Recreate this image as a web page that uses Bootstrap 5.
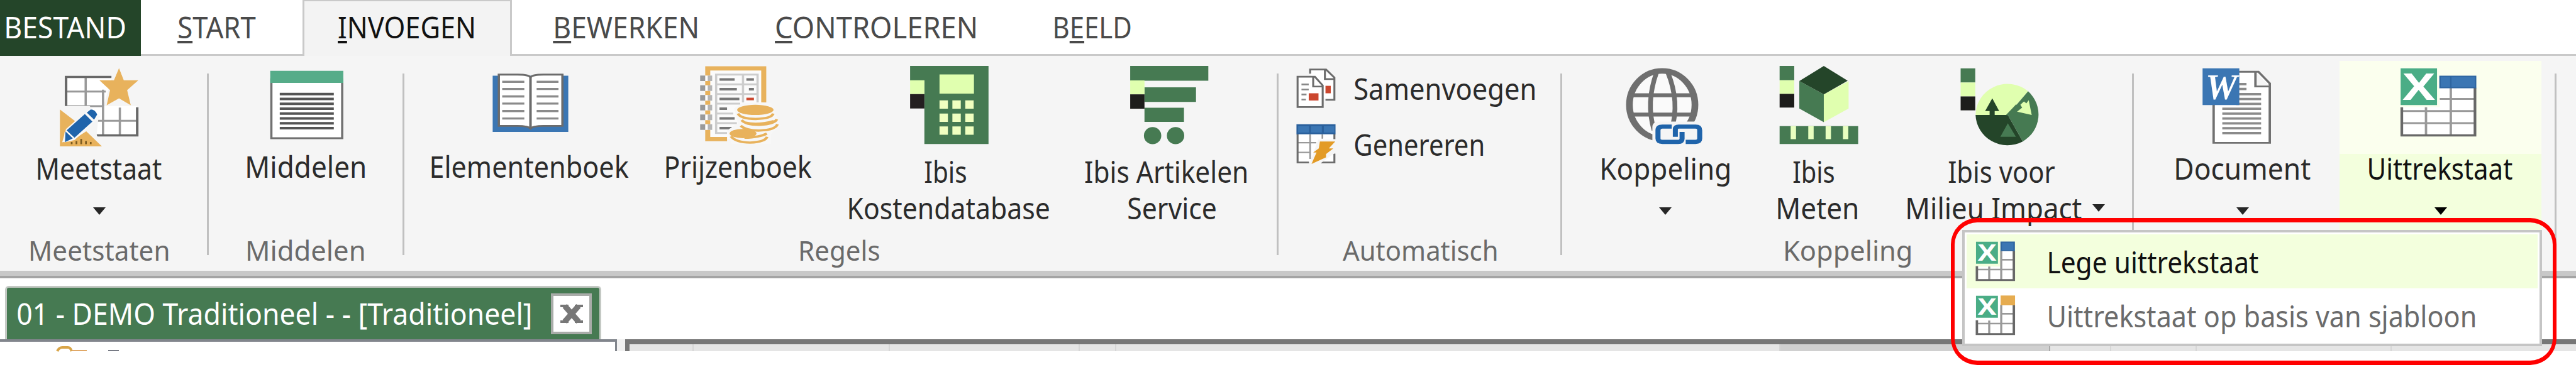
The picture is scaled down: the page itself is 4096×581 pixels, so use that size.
<!DOCTYPE html>
<html lang="nl">
  <head>
    <meta charset="UTF-8" />
    <meta name="viewport" content="width=device-width, initial-scale=1.0" />
    <title>Ibis - Invoegen</title>
    <link
      rel="stylesheet"
      href="https://cdn.jsdelivr.net/npm/bootstrap@5.3.3/dist/css/bootstrap.min.css"
    />
    <script src="https://cdn.jsdelivr.net/npm/bootstrap@5.3.3/dist/js/bootstrap.bundle.min.js"></script>
    <style>
      body {
        width: 4096px;
        height: 581px;
        overflow: hidden;
        background: #fff;
        font-family: "Noto Sans", "Open Sans", sans-serif;
        font-size: 48px;
        line-height: 58px;
        color: #2b2b2b;
      }
      svg { display: block; flex-shrink: 0; overflow: visible; }

      /* labels are squeezed to the width in data-w */
      .fit { display: block; height: 58px; white-space: nowrap; flex-shrink: 0; }
      .fit > span { display: inline-block; transform-origin: 0 0; }
      .fit u {
        text-decoration-thickness: 4px;
        text-underline-offset: 4px;
        text-decoration-skip-ink: none;
      }

      /* tab bar */
      .tabs-bar { height: 89px; color: #4a4a4a; }
      .tabs-bar .tab-item { height: 89px; padding-top: 14px; border-bottom: 3px solid #c9c9c9; }
      .tabs-bar .tab-file { width: 224px; padding-left: 8px; background: #244529; color: #fff; border-bottom: 0; }
      .tabs-bar .tab-start { width: 257px; padding-left: 58px; }
      .tabs-bar .tab-active {
        width: 333px;
        padding: 12px 0 0 52px;
        background: #f3f3f3;
        color: #111;
        border: 3px solid #c9c9c9;
        border-width: 2px 3px 0;
      }
      .tabs-bar .tab-rest { padding-left: 67px; }
      .gap-tabs { gap: 123px; }

      /* ribbon */
      .ribbon {
        height: 354px;
        background: #f5f5f5;
        border-bottom: 4px solid #a4a4a4;
        box-shadow: inset 0 -8px #c8c8c8;
      }
      .ribbon-group { height: 338px; padding-bottom: 2px; flex-shrink: 0; }
      .rule { width: 3px; height: 289px; margin-top: 28px; background: #c0c0c0; flex-shrink: 0; }
      .ribbon-caption { font-size: 43px; line-height: 52px; color: #6a6a6a; }
      .ribbon-caption .fit { height: 52px; }
      .tool { height: 276px; padding-top: 15px; flex-shrink: 0; }
      .tool > svg { width: 100%; height: 130px; }
      .tool .arrow { width: 20px; height: 12px; }
      .drop .fit { margin-top: 5px; }
      .drop .arrow { margin-top: 33px; }
      .plain .fit { margin-top: 2px; }
      .double .first { margin-top: 10px; }
      .shift-left { margin-right: 12px; }
      .shift-right { margin-left: 8px; }
      .g-meet { width: 329px; padding-right: 13px; }
      .g-mid { width: 308px; }
      .g-reg { width: 1387px; padding-left: 22px; }
      .g-reg .ribbon-caption { padding-right: 25px; }
      .g-auto { width: 448px; }
      .g-kop { width: 906px; padding-left: 10px; }
      .g-kop .ribbon-caption { padding-right: 9px; }
      .g-doc { width: 669px; padding-left: 19px; }
      .w-meet { width: 316px; }
      .w-mid { width: 308px; }
      .w-ele { width: 355px; }
      .w-pri { width: 309px; }
      .w-kos { width: 359px; }
      .w-art { width: 342px; }
      .w-kop { width: 307px; }
      .w-ibm { width: 176px; }
      .w-mil { width: 403px; margin-left: 10px; }
      .w-doc { width: 308px; }
      .w-uit {
        width: 321px;
        margin-top: 8px;
        padding-top: 7px;
        color: #111;
        background: linear-gradient(#fbffee 148px, #f3ffdd 148px);
      }
      .auto-list { padding: 19px 0 0 28px; height: 276px; }
      .auto-list svg { width: 63px; height: 65px; }
      .auto-list .auto-row { height: 89px; gap: 28px; }
      .auto-list .fit { margin-top: 4px; }

      /* documents */
      .doc-bar { height: 97px; padding: 12px 0 0 8px; }
      .doc-tab {
        width: 948px;
        height: 85px;
        padding: 0 12px 0 15px;
        background: #467a52;
        border: 3px solid #c4c9c4;
        border-bottom: 0;
        border-radius: 6px 6px 0 0;
        color: #fff;
      }
      .doc-close { width: 65px; height: 65px; background: #fff; border: 4px solid #a9aca9; }
      .panes { height: 19px; }
      .pane-left { width: 981px; border: 4px solid #81858c; border-width: 4px 3px 0 0; padding-left: 88px; }
      .pane-gap { width: 13px; background: #f1f1f1; }
      .pane-right { width: 3102px; border: solid #777; border-width: 8px 0 0 7px; background: #e5e5e5; }
      .pane-right div { border-right: 2px solid #d6d6d6; flex-shrink: 0; }

      /* drop-down menu and the marker round it */
      .menu-pop {
        position: absolute;
        left: 3120px;
        top: 366px;
        width: 922px;
        height: 185px;
        padding: 3px;
        background: #fff;
        border: 4px solid #c5c5c5;
      }
      .menu-row { height: 86px; padding-left: 14px; gap: 51px; color: #6b6b6b; }
      .menu-row.on { background: #f3ffdd; color: #111; }
      .menu-row svg { width: 64px; height: 64px; margin-top: -1px; }
      .menu-row .fit { margin-top: 2px; }
      .marker {
        position: absolute;
        left: 3102px;
        top: 347px;
        width: 963px;
        height: 234px;
        border: 7px solid #f00;
        border-width: 7px 6px;
        border-radius: 42px;
      }
    </style>
  </head>

  <body class="position-relative">
    <header class="tabs-bar d-flex">
      <div class="tab-item tab-file"><div class="fit" data-w="192"><span>BESTAND</span></div></div>
      <div class="tab-item tab-start"><div class="fit" data-w="126"><span><u>S</u>TART</span></div></div>
      <div class="tab-item tab-active"><div class="fit" data-w="218"><span><u>I</u>NVOEGEN</span></div></div>
      <nav class="tab-item tab-rest d-flex flex-grow-1 gap-tabs">
        <div class="fit" data-w="228"><span><u>B</u>EWERKEN</span></div>
        <div class="fit" data-w="320"><span><u>C</u>ONTROLEREN</span></div>
        <div class="fit" data-w="124"><span>B<u>E</u>ELD</span></div>
      </nav>
    </header>

    <main class="ribbon d-flex">
      <section class="ribbon-group g-meet d-flex flex-column justify-content-between">
        <div class="tool drop w-meet d-flex flex-column align-items-center">
          <svg viewBox="0 280 709.7 352" preserveAspectRatio="none">
            <path fill="#fff" d="M236 330H400L370 455H490V582H236z" />
            <path fill="none" stroke="#999" stroke-width="8" d="M306 330V470M368 385V582M236 393H378M236 456H370M428 462V582M345 519H490" />
            <path fill="none" stroke="#686868" stroke-width="9" d="M236 470V330H398M345 582H490V461" />
            <path fill="#f5f5f5" d="M210 455L320 455L352 500L345 580L370 632H210z" />
            <path fill="#e8b25c" d="M425 292l17 52h52l-40 43 13 65-42-30-44 30 12-65-38-43h52z" />
            <path fill="#e8b25c" d="M214 470l54 50-38 50v42l24-6 54-42 56 65H214z" />
            <path fill="#f8f8f8" d="M222 612l14-58 84-88 38 36-92 100z" />
            <path fill="#1f64ab" d="M324 470q16 0 23 22l-11 22-26-30zM303 490l27 32-64 70-28-32zM234 565l26 30-28 16z" />
            <path stroke="#7a5a20" stroke-width="6" d="M256 610v10M273 606v14M290 597v23M307 606v14M324 610v10" />
          </svg>
          <div class="fit" data-w="200"><span>Meetstaat</span></div>
          <svg class="arrow" viewBox="0 0 20 12"><path d="M0 0H20L10 12z" fill="#262626" /></svg>
        </div>
        <div class="ribbon-caption d-flex justify-content-center"><div class="fit" data-w="222"><span>Meetstaten</span></div></div>
      </section>
      <div class="rule"></div>

      <section class="ribbon-group g-mid d-flex flex-column justify-content-between">
        <div class="tool plain w-mid d-flex flex-column align-items-center">
          <svg viewBox="745.6 280 691.7 352" preserveAspectRatio="none">
            <path fill="#fff" stroke="#717171" stroke-width="8" d="M969 340H1222V594H969z" />
            <path fill="#56ac89" d="M965 304H1226V356H965z" />
            <path stroke="#555" stroke-width="11" d="M999 404H1192M999 425H1192M999 446H1192M999 467H1192M999 488H1192M999 509H1192M999 530H1192M999 551H1192" />
          </svg>
          <div class="fit" data-w="190"><span>Middelen</span></div>
        </div>
        <div class="ribbon-caption d-flex justify-content-center"><div class="fit" data-w="188"><span>Middelen</span></div></div>
      </section>
      <div class="rule"></div>

      <section class="ribbon-group g-reg d-flex flex-column justify-content-between">
        <div class="d-flex">
          <div class="tool plain w-ele d-flex flex-column align-items-center">
            <svg viewBox="30.1 280 797.3 352" preserveAspectRatio="none">
              <path fill="#3b76b3" d="M296 325H566V567H296z" />
              <path fill="#fff" stroke="#6c6c6c" stroke-width="8" d="M318 320H385Q425 320 431 332Q437 320 477 320H545V541H477Q440 541 431 552Q422 541 385 541H318z" />
              <path stroke="#6c6c6c" stroke-width="9" d="M431 328V552" />
              <path stroke="#8b8b8b" stroke-width="9" d="M330 351H409M330 382H409M330 414H409M330 445H409M330 477H409M330 509H409M453 351H531M453 382H531M453 414H531M453 445H531M453 477H531M453 509H531" />
            </svg>
            <div class="fit" data-w="317"><span>Elementenboek</span></div>
          </div>
          <div class="tool plain w-pri d-flex flex-column align-items-center">
            <svg viewBox="827.4 280 694 352" preserveAspectRatio="none">
              <path fill="#fbfbfb" d="M1064 293H1264V440L1150 598H1064z" />
              <path fill="none" stroke="#e8b25c" stroke-width="18" d="M1264 440V293H1064V598H1133" />
              <path fill="none" stroke="#cdcdcd" stroke-width="8" d="M1242 440V320H1094V572H1133M1094 362H1242M1094 404H1242M1094 445H1180M1094 488H1155M1094 529H1168M1190 320V440" />
              <path stroke="#777" stroke-width="11" d="M1106 341H1160M1106 383H1168M1106 425H1177M1106 467H1133M1106 509H1160M1106 551H1150M1202 341H1229M1211 383H1229" />
              <path stroke="#cb472f" stroke-width="11" d="M1202 425H1229" />
              <path stroke="#fff" stroke-width="40" stroke-dasharray="24 18" d="M1064 324V560" />
              <path stroke="#999" stroke-width="18" stroke-dasharray="24 18" d="M1046 324V560" />
              <path stroke="#b5b5b5" stroke-width="16" stroke-dasharray="24 18" d="M1072 324V560" />
              <path fill="#f7f7f7" d="M1158 465L1190 442H1290L1325 540 1290 575V620H1150L1133 560 1172 530z" />
              <g fill="#e8b25c">
                <ellipse cx="1234" cy="472" rx="65" ry="22" />
                <ellipse cx="1190" cy="574" rx="48" ry="20" />
              </g>
              <g fill="none" stroke="#e8b25c" stroke-width="10">
                <path d="M1172 488Q1182 511 1235 511Q1292 510 1298 488" />
                <path d="M1185 516Q1200 537 1250 536Q1302 533 1311 512" />
                <path d="M1182 540Q1200 562 1250 561Q1306 558 1313 534" />
                <path d="M1200 527Q1240 540 1300 520" />
                <path d="M1147 586Q1165 613 1215 613Q1270 610 1276 588" />
                <path d="M1195 592Q1250 590 1275 574" />
              </g>
            </svg>
            <div class="fit" data-w="235"><span>Prijzenboek</span></div>
          </div>
          <div class="tool double w-kos d-flex flex-column align-items-center">
            <svg viewBox="57.7 280 806.3 352" preserveAspectRatio="none">
              <path fill="#467a52" d="M323 283H603V619H374V345H323z" />
              <path fill="#e0ffaf" d="M323 344H374V404H323zM428 319H551V402H428z" />
              <path fill="#231f20" d="M323 404H374V466H323z" />
              <path stroke="#f0ffc0" stroke-width="36" stroke-dasharray="30 16" d="M428 449H551M428 506H551M428 561H551" />
            </svg>
            <div class="fit first shift-left" data-w="69"><span>Ibis</span></div>
            <div class="fit" data-w="321"><span>Kostendatabase</span></div>
          </div>
          <div class="tool double w-art d-flex flex-column align-items-center">
            <svg viewBox="864 280 768.1 352" preserveAspectRatio="none">
              <path fill="#467a52" d="M1109 283H1388V346H1109zM1160 375H1344V438H1160zM1160 463H1301V524H1160z" />
              <path fill="#e0ffaf" d="M1109 345H1160V405H1109z" />
              <path fill="#1d1d1b" d="M1109 405H1160V467H1109z" />
              <ellipse fill="#467a52" cx="1189" cy="583" rx="31" ry="37" />
              <ellipse fill="#467a52" cx="1271" cy="583" rx="31" ry="37" />
            </svg>
            <div class="fit first shift-left" data-w="260"><span>Ibis Artikelen</span></div>
            <div class="fit shift-right" data-w="142"><span>Service</span></div>
          </div>
        </div>
        <div class="ribbon-caption d-flex justify-content-center"><div class="fit" data-w="128"><span>Regels</span></div></div>
      </section>
      <div class="rule"></div>

      <section class="ribbon-group g-auto d-flex flex-column justify-content-between">
        <div class="auto-list">
          <div class="auto-row d-flex">
            <svg viewBox="133 290 142 175" preserveAspectRatio="none">
              <path fill="#fff" stroke="#6c6c6c" stroke-width="7" d="M183 315V297H240L270 332V427H238" />
              <path fill="none" stroke="#6c6c6c" stroke-width="7" d="M236 300V338H270" />
              <path fill="#cb472f" d="M238 367H257V399H238z" />
              <path fill="#fff" stroke="#6c6c6c" stroke-width="7" d="M138 328H200L228 365V458H138z" />
              <path fill="none" stroke="#6c6c6c" stroke-width="7" d="M194 330V370H226" />
              <path stroke="#888" stroke-width="7" d="M152 361H178M152 383H178M152 404H170M152 426H168" />
              <path fill="#cb472f" d="M178 399H213V430H178z" />
            </svg>
            <div class="fit" data-w="289"><span>Samenvoegen</span></div>
          </div>
          <div class="auto-row d-flex">
            <svg viewBox="133 532 142 175" preserveAspectRatio="none">
              <path fill="#fff" d="M137 575H271V698H137z" />
              <path stroke="#999" stroke-width="6" d="M183 577V683M227 577V596M140 613H205M140 655H185" />
              <path fill="none" stroke="#6c6c6c" stroke-width="7" d="M138 575V698H179M270 575V598M270 660V698H222" />
              <path fill="#2a609c" d="M134 534H274V577H134z" />
              <path fill="#3b76b3" d="M140 542H179V570H140zM186 542H225V570H186zM232 542H270V570H232z" />
              <path fill="#f5f5f5" d="M212 600H274V655L215 706H180z" />
              <path fill="#e39b26" d="M218 608H273L250 638H266L240 662V676L188 704 206 655H194L214 638z" />
            </svg>
            <div class="fit" data-w="207"><span>Genereren</span></div>
          </div>
        </div>
        <div class="ribbon-caption d-flex justify-content-center"><div class="fit" data-w="248"><span>Automatisch</span></div></div>
      </section>
      <div class="rule"></div>

      <section class="ribbon-group g-kop d-flex flex-column justify-content-between">
        <div class="d-flex">
          <div class="tool drop w-kop d-flex flex-column align-items-center">
            <svg viewBox="1106.4 280 689.5 352" preserveAspectRatio="none">
              <ellipse fill="#fafafa" stroke="#6f6f6f" stroke-width="24" cx="1441" cy="450" rx="117" ry="146" />
              <path fill="none" stroke="#6f6f6f" stroke-width="17" d="M1325 409H1558M1325 492H1558M1421 310Q1382 440 1412 560M1461 310Q1505 440 1474 560" />
              <path fill="#f5f5f5" d="M1406 545Q1406 522 1435 522H1600V632H1406z" />
              <g fill="none" stroke="#1f64ab" stroke-width="18">
                <path d="M1475 544H1442Q1426 544 1426 560V595Q1426 610 1442 610H1498Q1512 610 1512 596V567" />
                <path d="M1525 610H1560Q1575 610 1575 595V560Q1575 544 1560 544H1500Q1488 544 1488 556V588" />
              </g>
            </svg>
            <div class="fit" data-w="206"><span>Koppeling</span></div>
            <svg class="arrow" viewBox="0 0 20 12"><path d="M0 0H20L10 12z" fill="#262626" /></svg>
          </div>
          <div class="tool double w-ibm d-flex flex-column align-items-center">
            <svg viewBox="311.6 280 370.6 352" preserveAspectRatio="none">
              <path fill="#467a52" d="M372 283H421V344H372zM438 348L520 405V525L438 466zM372 542H635V619H372z" />
              <path fill="#e0ffaf" d="M372 344H421V403H372zM520 405L603 348V466L520 525z" />
              <path fill="#1d1d1b" d="M372 403H421V462H372z" />
              <path fill="#244529" d="M520 283L600 346 520 405 438 348z" />
              <path stroke="#e8ffc0" stroke-width="18" d="M418 542V598M477 542V598M535 542V598M593 542V598" />
            </svg>
            <div class="fit first shift-left" data-w="68"><span>Ibis</span></div>
            <div class="fit" data-w="129"><span>Meten</span></div>
          </div>
          <div class="tool double w-mil d-flex flex-column align-items-center">
            <svg viewBox="703.2 280 848.5 352" preserveAspectRatio="none">
              <path fill="#467a52" d="M978 293H1027V354H978z" />
              <path fill="#e0ffaf" d="M978 354H1027V414H978z" />
              <path fill="#1d1d1b" d="M978 414H1027V474H978z" />
              <path fill="#e0ffaf" d="M1136 494H1028A107 135 0 0 1 1204 392z" />
              <path fill="#467a52" d="M1136 494L1204 392A107 135 0 0 1 1186 608z" />
              <path fill="#244529" d="M1136 494L1186 608A107 135 0 0 1 1028 494zM1084 422L1107 477H1092V497H1075V477H1060z" />
              <path fill="#467a52" d="M1136 530L1163 588H1111zM1130 494L1164 448 1172 460 1145 500zM1178 434L1196 408 1204 418 1186 444z" />
              <path fill="#e0ffaf" d="M1206 430L1216 494 1167 480 1184 462 1178 450 1190 436 1198 444z" />
            </svg>
            <div class="fit first shift-left" data-w="173"><span>Ibis voor</span></div>
            <div class="d-flex">
              <div class="fit" data-w="280"><span>Milieu Impact</span></div>
              <svg class="arrow align-self-center ms-3" viewBox="0 0 20 12"><path d="M0 0H20L10 12z" fill="#262626" /></svg>
            </div>
          </div>
        </div>
        <div class="ribbon-caption d-flex justify-content-center"><div class="fit" data-w="202"><span>Koppeling</span></div></div>
      </section>
      <div class="rule"></div>

      <section class="ribbon-group g-doc d-flex">
        <div class="tool drop w-doc d-flex flex-column align-items-center">
          <svg viewBox="128 280 648.5 352" preserveAspectRatio="none">
            <path fill="#fff" stroke="#717171" stroke-width="8" d="M355 308H505L543 358V614H355z" />
            <path fill="#f5f5f5" stroke="#717171" stroke-width="8" d="M495 308V371H543" />
            <path stroke="#8b8b8b" stroke-width="10" d="M430 361H465M430 382H465M430 404H514M430 425H514M430 446H514M384 467H514M384 488H514M384 509H514M384 530H514M384 551H514M384 572H514" />
            <path fill="#3b76b3" d="M318 293H441V451H318z" />
            <text x="328" y="427" font-family="Liberation Serif" font-weight="700" font-style="italic" font-size="154" textLength="106" lengthAdjust="spacingAndGlyphs" fill="#fff">W</text>
          </svg>
          <div class="fit" data-w="217"><span>Document</span></div>
          <svg class="arrow" viewBox="0 0 20 12"><path d="M0 0H20L10 12z" fill="#262626" /></svg>
        </div>
        <div class="tool drop w-uit d-flex flex-column align-items-center">
          <svg viewBox="776.5 280 675.9 352" preserveAspectRatio="none">
            <path fill="#fff" d="M985 460H1112V377H1230V582H985z" />
            <path stroke="#999" stroke-width="8" d="M1112 425H1230M985 477H1230M985 529H1230M1066 461V580M1149 377V580" />
            <path fill="none" stroke="#686868" stroke-width="9" d="M985 461V582H1230V377" />
            <path fill="#3b76b3" stroke="#2e65a0" stroke-width="5" d="M1113 327H1232V376H1113zM1149 327V376" />
            <path fill="#4aad86" d="M981 293H1103V451H981z" />
            <text x="988" y="430" font-family="Open Sans" font-weight="700" font-size="160" textLength="108" lengthAdjust="spacingAndGlyphs" fill="#fff">X</text>
          </svg>
          <div class="fit" data-w="231"><span>Uittrekstaat</span></div>
          <svg class="arrow" viewBox="0 0 20 12"><path d="M0 0H20L10 12z" fill="#000" /></svg>
        </div>
      </section>
      <div class="rule"></div>
    </main>

    <div class="doc-bar">
      <div class="doc-tab d-flex align-items-center justify-content-between">
        <div class="fit" data-w="818"><span>01 - DEMO Traditioneel - - [Traditioneel]</span></div>
        <div class="doc-close d-flex align-items-center justify-content-center">
          <svg width="36" height="29" viewBox="0 0 36 29">
            <path fill="none" stroke="#777" stroke-width="9" d="M7 2L29 27M29 2L7 27" />
            <path fill="#777" d="M0 0H13V4H0zM23 0H36V4H23zM0 25H13V29H0zM23 25H36V29H23z" />
          </svg>
        </div>
      </div>
    </div>

    <div class="panes d-flex">
      <div class="pane-left">
        <svg width="104" height="15" viewBox="0 0 104 15">
          <path fill="none" stroke="#d9a548" stroke-width="4" d="M3 15Q6 9 11 9H20Q24 9 26 15" />
          <path fill="#e0a868" d="M26 13H50V15H26z" />
          <path fill="#777b85" d="M84 13H101V15H84z" />
        </svg>
      </div>
      <div class="pane-gap"></div>
      <div class="pane-right d-flex" id="columnHeads"></div>
    </div>

    <div class="menu-pop">
      <div class="menu-row on d-flex align-items-center">
        <svg viewBox="1028 1037 134 172" preserveAspectRatio="none">
          <path fill="#fff" d="M1033 1145H1114V1078H1156V1202H1033z" />
          <path stroke="#999" stroke-width="7" d="M1114 1078V1202M1114 1116H1156M1033 1158H1156M1074 1145V1202" />
          <path fill="none" stroke="#686868" stroke-width="8" d="M1033 1144V1203H1156V1078" />
          <path fill="#3b76b3" stroke="#2e65a0" stroke-width="5" d="M1114 1041H1157V1077H1114z" />
          <path fill="#4aad86" d="M1030 1039H1103V1133H1030z" />
          <text x="1036" y="1121" font-family="Open Sans" font-weight="700" font-size="98" textLength="62" lengthAdjust="spacingAndGlyphs" fill="#fff">X</text>
        </svg>
        <div class="fit" data-w="336"><span>Lege uittrekstaat</span></div>
      </div>
      <div class="menu-row d-flex align-items-center">
        <svg viewBox="1028 1037 134 172" preserveAspectRatio="none">
          <path fill="#fff" d="M1033 1145H1114V1078H1156V1202H1033z" />
          <path stroke="#999" stroke-width="7" d="M1114 1078V1202M1114 1116H1156M1033 1158H1156M1074 1145V1202" />
          <path fill="none" stroke="#686868" stroke-width="8" d="M1033 1144V1203H1156V1078" />
          <path fill="#e6ac50" d="M1112 1038H1160V1080H1112z" />
          <path fill="#4aad86" d="M1030 1039H1103V1133H1030z" />
          <text x="1036" y="1121" font-family="Open Sans" font-weight="700" font-size="98" textLength="62" lengthAdjust="spacingAndGlyphs" fill="#fff">X</text>
        </svg>
        <div class="fit" data-w="680"><span>Uittrekstaat op basis van sjabloon</span></div>
      </div>
    </div>
    <div class="marker"></div>

    <script>
      // widths of the column heads in the right-hand pane
      const heads = [102, 312, 302, 58, 1056, 429, 97, 136, 310];
      const columnHeads = document.querySelector("#columnHeads");

      for (let i = 0; i < heads.length; i++) {
        const head = document.createElement("div");
        head.style.width = heads[i] + "px";
        if (heads[i] === 429) {
          head.style.background = "#d0d0d0";
          head.style.borderColor = "#aaa";
        }
        columnHeads.appendChild(head);
      }

      // scale every label so that its ink fills data-w, less a pixel or so at each side
      const ctx = document.createElement("canvas").getContext("2d");
      document.querySelectorAll(".fit").forEach(function (box) {
        const span = box.querySelector("span");
        const style = getComputedStyle(span);
        ctx.font = style.fontSize + " " + style.fontFamily;
        const m = ctx.measureText(span.textContent);
        const scale = (box.dataset.w - 3) / (m.actualBoundingBoxLeft + m.actualBoundingBoxRight);
        box.style.width = box.dataset.w + "px";
        span.style.transform =
          "translateX(" + (m.actualBoundingBoxLeft * scale + 2) + "px) scaleX(" + scale + ")";
      });
    </script>
  </body>
</html>
